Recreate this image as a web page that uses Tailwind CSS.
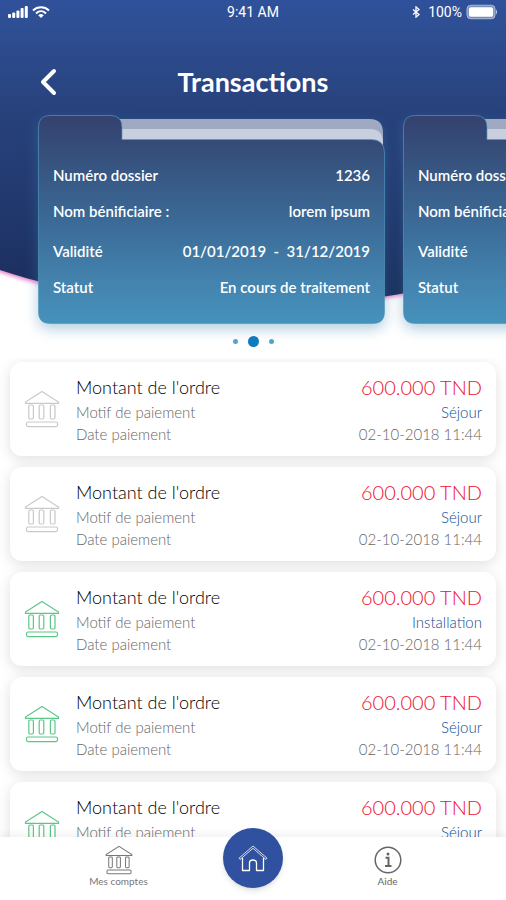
<!DOCTYPE html>
<html lang="fr">

<head>
    <meta charset="UTF-8">
    <meta name="viewport" content="width=device-width, initial-scale=1.0">
    <title>Transactions</title>
    <script src="https://cdn.jsdelivr.net/npm/@tailwindcss/browser@4"></script>
</head>

<body class="bg-white font-['Lato','Noto_Sans',sans-serif]">
    <!-- Shared icon shapes -->
    <svg class="hidden">
        <symbol id="bank" viewBox="0 0 36 38">
            <path d="M18 1.5L34.5 12v1.3h-33V12z" />
            <rect x="4.8" y="15" width="4.6" height="14" rx="1.2" />
            <rect x="15.2" y="15" width="4.6" height="14" rx="1.2" />
            <rect x="26.4" y="15" width="4.6" height="14" rx="1.2" />
            <rect x="2.5" y="32" width="31" height="4.6" rx="1.5" />
        </symbol>
    </svg>

    <div class="relative flex h-screen flex-col overflow-hidden">
        <!-- Curved background -->
        <svg class="absolute inset-x-0 top-0 h-80 w-full" viewBox="0 0 506 320" preserveAspectRatio="none">
            <defs>
                <linearGradient id="sky" x1="0" y1="0" x2="0" y2="1">
                    <stop offset="0" stop-color="#2f519b" />
                    <stop offset="0.08" stop-color="#2e4f94" />
                    <stop offset="0.35" stop-color="#28427d" />
                    <stop offset="0.75" stop-color="#20366a" />
                    <stop offset="1" stop-color="#1a2d59" />
                </linearGradient>
                <filter id="glow" x="-10%" y="-10%" width="120%" height="120%">
                    <feGaussianBlur stdDeviation="2" />
                </filter>
            </defs>
            <path d="M-20 262C150 323 330 321 526 262" fill="none" stroke="#e56fc0" stroke-width="6" filter="url(#glow)" />
            <path d="M0 0H506V268C340 321 150 319 0 270z" fill="url(#sky)" />
        </svg>

        <div class="relative z-10">
            <!-- Status bar -->
            <div class="grid h-6 grid-cols-3 items-center px-2 font-['Roboto',sans-serif] text-[14px] text-white">
                <div class="flex items-center gap-1">
                    <svg class="h-3 w-5" viewBox="0 0 20 12" fill="currentColor">
                        <rect x="0" y="8" width="3" height="4" rx="1" />
                        <rect x="4.2" y="6.5" width="3" height="5.5" rx="1" />
                        <rect x="8.4" y="4.5" width="3" height="7.5" rx="1" />
                        <rect x="12.6" y="2" width="3" height="10" rx="1" />
                        <rect x="16.8" y="0" width="3" height="12" rx="1" />
                    </svg>
                    <svg class="h-3 w-[18px]" viewBox="0 0 18 12" fill="none" stroke="currentColor" stroke-width="2">
                        <path d="M1 4.4C5.5 .2 12.5 .2 17 4.4" />
                        <path d="M4 7.4C7 4.6 11 4.6 14 7.4" />
                        <path d="M9 12L6.2 9.2Q9 7 11.8 9.2z" fill="currentColor" stroke="none" />
                    </svg>
                </div>
                <span class="text-center">9:41 AM</span>
                <div class="flex items-center justify-end gap-1">
                    <svg class="mr-1 h-3 w-2" viewBox="0 0 9 14" fill="none" stroke="currentColor" stroke-width="1.5">
                        <path d="M1 4l7 6-3.5 3V1L8 4l-7 6" />
                    </svg>
                    <span>100%</span>
                    <svg class="h-4 w-8" viewBox="0 0 33 16">
                        <rect x="1" y="1" width="29" height="14" rx="4" fill="#fff" fill-opacity="0.35" stroke="#d5dcec" stroke-opacity="0.7" />
                        <rect x="3" y="3" width="25" height="10" rx="2" fill="#fff" />
                        <path d="M31 5.5q2 2.5 0 5z" fill="#d5dcec" />
                    </svg>
                </div>
            </div>

            <!-- Title -->
            <header class="grid grid-cols-[1fr_auto_1fr] items-center px-8 pt-9">
                <button type="button" aria-label="Retour" class="flex h-11 w-8 items-center justify-center justify-self-start text-white">
                    <svg class="h-7 w-5" viewBox="0 0 20 28" fill="none" stroke="currentColor" stroke-width="4" stroke-linecap="round" stroke-linejoin="round">
                        <path d="M16 3L5 14l11 11" />
                    </svg>
                </button>
                <h1 class="text-[27px] leading-[44px] font-bold text-white">Transactions</h1>
            </header>

            <!-- Folder carousel -->
            <div id="folders" class="-mb-8 flex gap-[18px] overflow-hidden pt-[11px] pb-8 pl-[38px]"></div>

            <div class="flex h-[34px] items-center justify-center gap-[10px]">
                <span class="size-[5px] rounded-full bg-[#56a5cf]"></span>
                <span class="size-[11px] rounded-full bg-[#0f7ac0]"></span>
                <span class="size-[5px] rounded-full bg-[#56a5cf]"></span>
            </div>
        </div>

        <!-- Payments -->
        <main class="min-h-0 flex-1 overflow-hidden">
            <ul id="payments" class="flex flex-col gap-[11px] px-[10px] pt-1"></ul>
        </main>

        <!-- Bottom navigation -->
        <nav class="relative z-20 grid h-[63px] shrink-0 grid-cols-[1fr_auto_1fr] bg-white px-[14px] shadow-[0_-3px_8px_rgba(0,0,0,0.06)]">
            <a href="#comptes" class="flex flex-col items-center pt-2 text-[#777]">
                <svg class="h-[30px] w-7" fill="none" stroke="currentColor" stroke-width="1.3"><use href="#bank" /></svg>
                <span class="text-[10px] leading-3">Mes comptes</span>
            </a>
            <a href="#accueil" aria-label="Accueil" class="-mt-[9px] flex size-[60px] items-center justify-center rounded-full bg-[#2f519f] text-white shadow-md">
                <svg class="size-8" viewBox="0 0 32 32" fill="none" stroke="currentColor" stroke-width="1.3" stroke-linejoin="round">
                    <path d="M2 16.2L16 4l14 12.2-1 1.3L16 6.3 3 17.5z" stroke-width="0.8" />
                    <path d="M5.5 16V28.5h7V21q0-3 3.5-3t3.5 3v7.5h7V16" />
                </svg>
            </a>
            <a href="#aide" class="flex flex-col items-center pt-[9px] text-[#666]">
                <svg class="size-7" viewBox="0 0 28 28" fill="none" stroke="currentColor" stroke-width="1.5">
                    <circle cx="14" cy="14" r="12.8" />
                    <path d="M11.5 11.8h3V19.5M11 20h6.5" stroke-width="2" />
                    <circle cx="14" cy="8" r="1.5" fill="currentColor" stroke="none" />
                </svg>
                <span class="text-[10px] leading-[14px]">Aide</span>
            </a>
        </nav>
    </div>

    <script>
        const folder = {
            numero: '1236',
            nom: 'lorem ipsum',
            validite: '01/01/2019 &nbsp;-&nbsp; 31/12/2019',
            statut: 'En cours de traitement'
        };

        const payments = [
            { motif: 'Séjour', color: 'text-[#c9c9c9]' },
            { motif: 'Séjour', color: 'text-[#c9c9c9]' },
            { motif: 'Installation', color: 'text-[#5cc687]' },
            { motif: 'Séjour', color: 'text-[#5cc687]' },
            { motif: 'Séjour', color: 'text-[#5cc687]' }
        ];

        const folderRow = (label, value) => `
            <div class="flex h-9 items-center justify-between">
                <dt>${label}</dt>
                <dd>${value}</dd>
            </div>
        `;

        const renderFolder = (item) => `
            <article class="relative w-[347px] shrink-0">
                <svg class="absolute inset-0 h-full w-full drop-shadow-[0_5px_7px_rgba(60,130,175,0.4)]" viewBox="0 0 347 209" preserveAspectRatio="none">
                    <defs>
                        <linearGradient id="folderFill" x1="0" y1="0" x2="0" y2="1">
                            <stop offset="0" stop-color="#34416f" />
                            <stop offset="0.18" stop-color="#364f7b" />
                            <stop offset="0.5" stop-color="#3b6996" />
                            <stop offset="0.8" stop-color="#4383ae" />
                            <stop offset="1" stop-color="#4592bd" />
                        </linearGradient>
                    </defs>
                    <path d="M70 4H332Q345 4 345 18V40H70z" fill="#9faac2" />
                    <path d="M70 14H332Q345 14 345 28V45H70z" fill="#c8d0df" />
                    <path d="M.5 12Q.5 .5 12 .5H72Q84 .5 84 12V24.5H333Q346.5 24.5 346.5 38V197Q346.5 208.5 335 208.5H12Q.5 208.5 .5 197z" fill="url(#folderFill)" stroke="#5599bd" stroke-opacity="0.65" />
                </svg>
                <dl class="relative flex flex-col gap-1 px-[15px] pt-[42px] pb-[19px] text-[15px] font-semibold text-white">
                    <div>
                        ${folderRow('Numéro dossier', item.numero)}
                        ${folderRow('Nom bénificiaire :', item.nom)}
                    </div>
                    <div>
                        ${folderRow('Validité', item.validite)}
                        ${folderRow('Statut', item.statut)}
                    </div>
                </dl>
            </article>
        `;

        const renderPayment = (item) => `
            <li class="flex h-[94px] shrink-0 items-center rounded-xl bg-white px-[14px] shadow-[0_3px_14px_rgba(0,0,0,0.13)]">
                <svg class="mr-4 h-[38px] w-9 shrink-0 ${item.color}" fill="none" stroke="currentColor" stroke-width="1.2"><use href="#bank" /></svg>
                <div class="flex-1 text-[15px] leading-[22px] font-light text-[#666]">
                    <div class="flex justify-between leading-7">
                        <h2 class="text-[18px] text-black">Montant de l'ordre</h2>
                        <span class="text-[20px] text-[#f0102f]">600.000 TND</span>
                    </div>
                    <div class="flex justify-between"><span>Motif de paiement</span><span class="text-[#0d4f96]">${item.motif}</span></div>
                    <div class="flex justify-between"><span>Date paiement</span><span>02-10-2018 11:44</span></div>
                </div>
            </li>
        `;

        document.getElementById('folders').innerHTML = renderFolder(folder) + renderFolder(folder);
        document.getElementById('payments').innerHTML = payments.map(renderPayment).join('');
    </script>
</body>

</html>
